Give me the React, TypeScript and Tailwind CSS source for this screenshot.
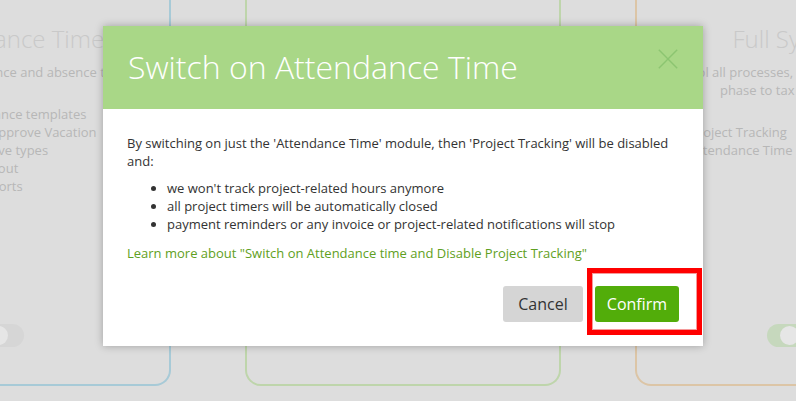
import React from 'react';

const font = { fontFamily: '"Open Sans", "Noto Sans", sans-serif' };

function Toggle({ on }: { on: boolean }) {
  return (
    <div
      className={`flex items-center w-[48px] h-[23px] rounded-full ${on ? 'bg-[#c6d8bd]' : 'bg-[#d6d6d6]'}`}
    >
      <div className="ml-[13px] w-[19px] h-[19px] rounded-full bg-[#e6e6e6]" />
    </div>
  );
}

function PlanCard({
  border,
  title,
  lines,
  items,
  on,
  itemsPad,
  togglePos,
}: {
  border: string;
  title?: string;
  lines: string[];
  items: string[];
  on?: boolean;
  itemsPad: string;
  togglePos: string;
}) {
  return (
    <div className={`w-[316px] h-[386px] shrink-0 flex flex-col items-center border-x-2 border-b-2 rounded-b-[16px] ${border}`}>
      <div className="pt-[23px] h-[55px] text-[24px] leading-[32px] font-light text-[#c9c9c9] whitespace-nowrap">{title}</div>
      <div className="mt-[8px] text-[13px] leading-[18px] text-[#b7b7b7] text-center whitespace-nowrap">
        {lines.map((l) => (
          <div key={l}>{l}</div>
        ))}
      </div>
      <ul className={`mt-[24px] self-start text-[13px] leading-[18px] text-[#b7b7b7] whitespace-nowrap ${itemsPad}`}>
        {items.map((i) => (
          <li key={i}>{i}</li>
        ))}
      </ul>
      {on !== undefined && (
        <div className={`mt-auto mb-[37px] ${togglePos}`}>
          <Toggle on={on} />
        </div>
      )}
    </div>
  );
}

export default function App() {
  return (
    <div className="relative w-[796px] h-[401px] overflow-hidden bg-[#dddddd]" style={font}>
      <div className="flex gap-[74px] ml-[-145px] w-[1096px]">
        <PlanCard
          border="border-[#a7cad7]"
          title="Attendance Time"
          lines={['Log your attendance and absence times']}
          items={['Attendance templates', 'See & approve Vacation', 'Add leave types', 'Sign in/out', 'Key reports']}
          on={false}
          itemsPad="pl-[96px]"
          togglePos="mr-[26px]"
        />
        <PlanCard border="border-[#bed5ab]" lines={[]} items={[]} itemsPad="" togglePos="" />
        <PlanCard
          border="border-[#dcc5a6]"
          title="Full System"
          lines={['Control all processes, from the first project', 'phase to tax declaration']}
          items={['Project Tracking', 'Attendance Time']}
          on={true}
          itemsPad="pl-[53px]"
          togglePos="mr-[4px]"
        />
      </div>

      {/* modal */}
      <div className="absolute left-[103px] top-[26px] w-[600px] bg-white shadow-[0_0_8px_rgba(0,0,0,0.28)]">
        <div className="relative h-[83px] bg-[#a9d787] pl-[25px] pt-[21px]">
          <h1 className="text-[32px] leading-[40px] font-light text-white">Switch on Attendance Time</h1>
          <svg className="absolute left-[555px] top-[23px]" width="20" height="20" viewBox="0 0 20 20">
            <path d="M0.8 0.8 L19.2 19.2 M19.2 0.8 L0.8 19.2" stroke="#8cc571" strokeWidth="1.4" fill="none" />
          </svg>
        </div>
        <div className="px-[24px] pt-[25px] pb-[24px] text-[13px] leading-[18px] text-[#333333]">
          <p>
            By switching on just the 'Attendance Time' module, then 'Project Tracking' will be disabled and:
          </p>
          <ul className="mt-[9px] pl-[40px] list-disc">
            <li>we won't track project-related hours anymore</li>
            <li>all project timers will be automatically closed</li>
            <li>payment reminders or any invoice or project-related notifications will stop</li>
          </ul>
          <a className="block mt-[11px] text-[#5fa022]">
            Learn more about "Switch on Attendance time and Disable Project Tracking"
          </a>
          <div className="mt-[24px] flex justify-end gap-[12px]">
            <button className="w-[80px] h-[36px] rounded-[3px] bg-[#d5d5d5] text-[16px] text-[#333333]">Cancel</button>
            <button className="w-[84px] h-[36px] rounded-[3px] bg-[#52ad0a] text-[16px] text-white">Confirm</button>
          </div>
        </div>
      </div>

      {/* annotation */}
      <div className="absolute left-[587px] top-[268px] w-[115px] h-[67px] border-[5px] border-[#ff0000] shadow-[inset_0_0_0_1px_#f49a9a]" />
    </div>
  );
}
